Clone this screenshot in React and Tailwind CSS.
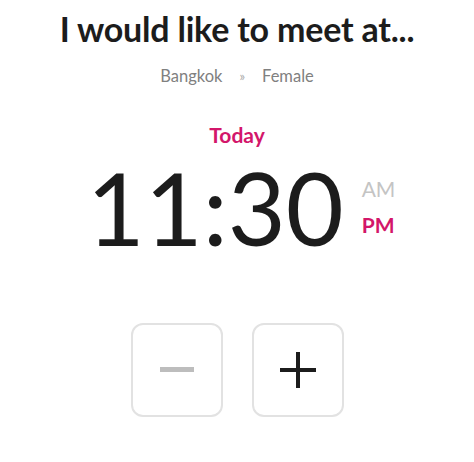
import React from "react";

export default function App() {
  return (
    <div className="w-[474px] h-[462px] bg-white flex flex-col items-center font-['Lato','Liberation_Sans',sans-serif]">
      <h1 className="mt-[12px] text-[34px] leading-none font-bold text-[#1c1c1c] tracking-[-0.2px]">
        I would like to meet at...
      </h1>
      <div className="mt-[22px] flex items-center gap-[17px] text-[16.5px] leading-none text-[#808080]">
        <span>Bangkok</span>
        <span className="text-[13px] text-[#aaaaaa]">»</span>
        <span>Female</span>
      </div>
      <div className="mt-[39px] text-[21px] leading-none font-bold text-[#d3166a]">Today</div>
      <div className="mt-[12px] flex items-start ml-[8px]">
        <div className="text-[100px] leading-none text-[#1c1c1c]">11:30</div>
        <div className="ml-[18px] flex flex-col text-[21px] leading-none">
          <span className="mt-[21px] text-[#c4c4c4]">AM</span>
          <span className="mt-[15px] font-bold text-[#d3166a]">PM</span>
        </div>
      </div>
      <div className="mt-[66px] flex gap-[29px]">
        <button className="w-[92px] h-[94px] rounded-[12px] border-2 border-[#e2e2e2] flex items-center justify-center">
          <span className="block w-[34px] h-[5px] bg-[#bdbdbd]"></span>
        </button>
        <button className="w-[92px] h-[94px] rounded-[12px] border-2 border-[#e2e2e2] flex items-center justify-center">
          <svg width="36" height="36" viewBox="0 0 36 36">
            <rect x="0" y="16" width="36" height="4" fill="#1c1c1c" />
            <rect x="16" y="0" width="4" height="36" fill="#1c1c1c" />
          </svg>
        </button>
      </div>
    </div>
  );
}
